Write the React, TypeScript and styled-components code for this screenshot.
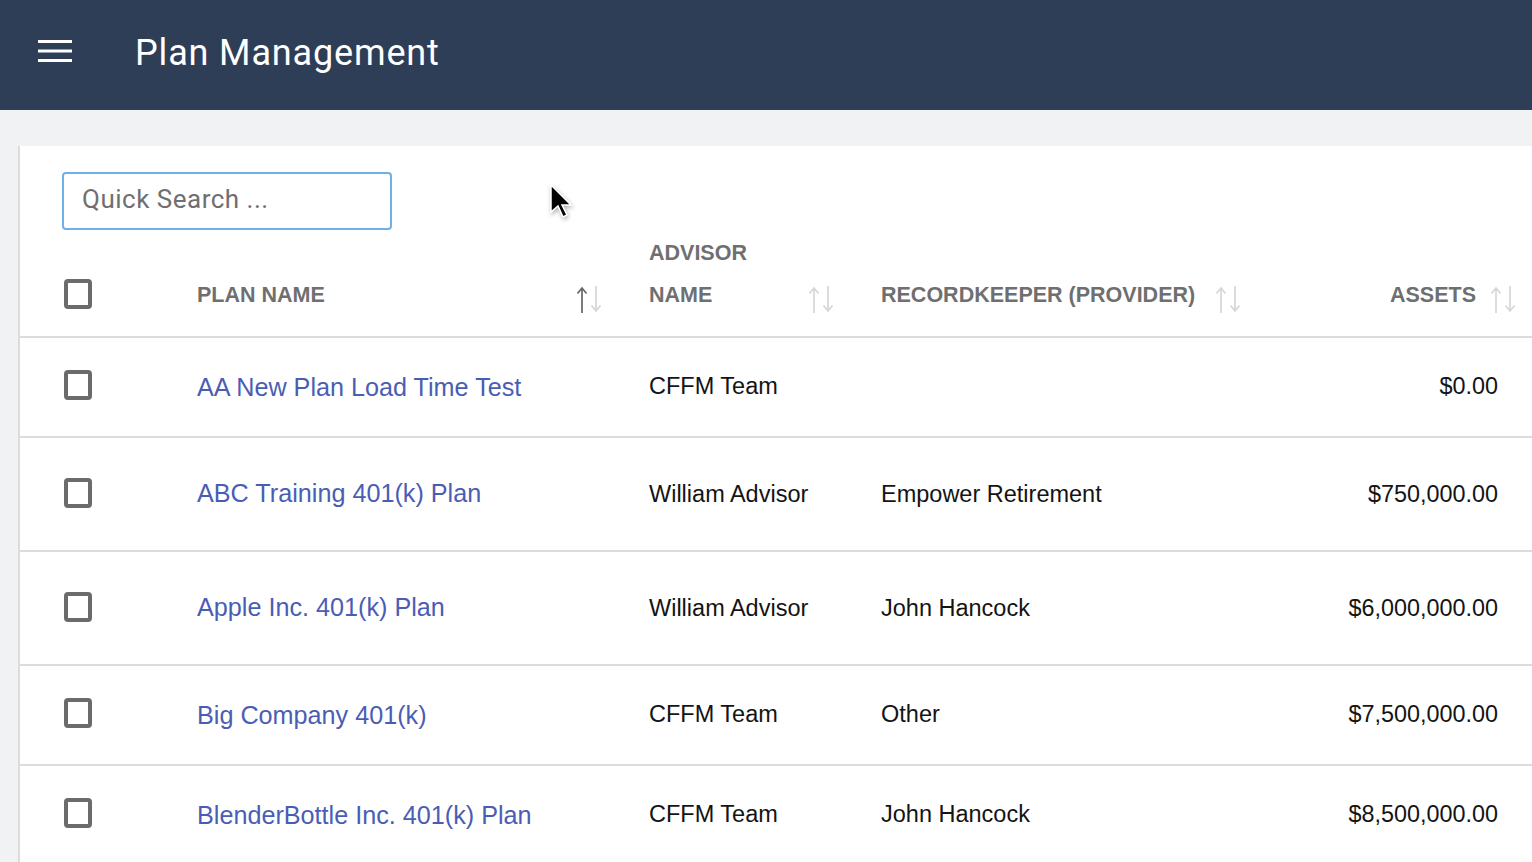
import React from "react";
import styled, { createGlobalStyle } from "styled-components";

const Global = createGlobalStyle`
  html, body { margin: 0; padding: 0; height: 100%; overflow: hidden; background: #f1f2f4; }
  * { box-sizing: border-box; }
`;

const Page = styled.div`
  position: relative;
  width: 1532px;
  height: 862px;
  overflow: hidden;
  background: #f1f2f4;
  font-family: "Liberation Sans", Arial, sans-serif;
`;

const TopBar = styled.header`
  display: flex;
  align-items: center;
  height: 110px;
  padding-left: 38px;
  background: #2f3e57;
  color: #fff;
`;

const MenuIcon = styled.svg`
  width: 34px;
  height: 24px;
  margin: 0 63px 8px 0;
  flex: none;
`;

const Title = styled.h1`
  margin: 0 0 4px;
  font-family: Roboto, sans-serif;
  font-weight: 400;
  font-size: 36px;
  letter-spacing: 0.85px;
  white-space: nowrap;
`;

const Card = styled.main`
  margin: 36px 0 0 18px;
  border-left: 2px solid #dcdcdc;
  background: #fff;
  height: 716px;
`;

const Toolbar = styled.div`
  padding: 26px 0 0 42px;
  height: 84px;
`;

const Search = styled.input`
  display: block;
  width: 330px;
  height: 58px;
  padding: 0 18px 4px;
  border: 2px solid #6fb0ec;
  border-radius: 4px;
  outline: none;
  font-family: Roboto, sans-serif;
  font-size: 26px;
  letter-spacing: 0.5px;
  color: #666;
  background: #fff;
  &::placeholder { color: #6f6f6f; opacity: 1; }
`;

const Row = styled.div<{ $h: number }>`
  display: grid;
  grid-template-columns: 177px 452px 232px 420px 1fr;
  height: ${p => p.$h}px;
  border-bottom: 2px solid #dcdcdc;
  align-items: center;
`;

const HeadRow = styled(Row)`
  align-items: end;
  padding-bottom: 19px;
`;

const CheckCell = styled.div<{ $lift: number }>`
  padding-left: 44px;
  display: flex;
  transform: translateY(${p => -p.$lift}px);
`;

const HeadCheckCell = styled(CheckCell)`
  padding-bottom: 8px;
`;

const Box = styled.span`
  display: block;
  width: 28px;
  height: 30px;
  border: 4px solid #6b6b6b;
  border-radius: 4px;
  background: #fff;
`;

const Head = styled.div<{ $pad: number; $between?: boolean; $right?: boolean }>`
  display: flex;
  align-items: flex-end;
  justify-content: ${p => (p.$right ? "flex-end" : p.$between ? "space-between" : "flex-start")};
  padding-right: ${p => p.$pad}px;
  color: #6f6f6f;
  font-weight: 700;
  font-size: 21.5px;
  line-height: 42px;
`;

const HeadText = styled.span`
  margin-bottom: 1px;
  white-space: nowrap;
`;

const SortIcon = styled.svg<{ $gap: number }>`
  width: 26px;
  height: 28px;
  flex: none;
  margin: 0 0 3px ${p => p.$gap}px;
`;

const PlanLink = styled.a<{ $lift: number }>`
  color: #4a5db5;
  font-size: 25.2px;
  text-decoration: none;
  transform: translateY(${p => -p.$lift}px);
`;

const Cell = styled.div<{ $lift?: number }>`
  color: #141414;
  font-size: 23.5px;
  transform: translateY(${p => -(p.$lift ?? 0)}px);
`;

const Amount = styled(Cell)`
  text-align: right;
  padding-right: 34px;
  font-size: 23.4px;
`;

const Cursor = styled.svg`
  position: absolute;
  left: 545px;
  top: 181px;
  width: 28px;
  height: 40px;
  filter: drop-shadow(1px 2px 2px rgba(0, 0, 0, 0.3));
`;

const Sort = ({ active, gap = 0 }: { active?: boolean; gap?: number }) => (
  <SortIcon $gap={gap} viewBox="0 0 26 28" fill="none" strokeWidth="1.700">
    <g stroke={active ? "#666" : "#d6d6d6"}>
      <path d="M6 27V2" />
      <path d="M1.500 7.500 6 2l4.500 5.500" />
    </g>
    <g stroke="#d6d6d6">
      <path d="M20 0v25" />
      <path d="M15.500 19.500 20 25l4.500-5.500" />
    </g>
  </SortIcon>
);

const rows = [
  { h: 100, box: 2, link: 0, cell: 1, name: "AA New Plan Load Time Test", advisor: "CFFM Team", keeper: "", assets: "$0.00" },
  { h: 114, box: 1, link: 1, cell: 0, name: "ABC Training 401(k) Plan", advisor: "William Advisor", keeper: "Empower Retirement", assets: "$750,000.00" },
  { h: 114, box: 1, link: 1, cell: 0, name: "Apple Inc. 401(k) Plan", advisor: "William Advisor", keeper: "John Hancock", assets: "$6,000,000.00" },
  { h: 100, box: 2, link: 0, cell: 1, name: "Big Company 401(k)", advisor: "CFFM Team", keeper: "Other", assets: "$7,500,000.00" },
  { h: 100, box: 2, link: 0, cell: 1, name: "BlenderBottle Inc. 401(k) Plan", advisor: "CFFM Team", keeper: "John Hancock", assets: "$8,500,000.00" },
];

export default function App() {
  return (
    <Page>
      <Global />
      <TopBar>
        <MenuIcon viewBox="0 0 34 24" fill="none" stroke="#fff" strokeWidth="3">
          <path d="M0 2.500h34M0 12h34M0 21.500h34" />
        </MenuIcon>
        <Title>Plan Management</Title>
      </TopBar>
      <Card>
        <Toolbar>
          <Search placeholder="Quick Search ..." />
        </Toolbar>
        <HeadRow $h={108}>
          <HeadCheckCell $lift={0}><Box /></HeadCheckCell>
          <Head $pad={47} $between>
            <HeadText>PLAN NAME</HeadText>
            <Sort active />
          </Head>
          <Head $pad={47} $between>
            <HeadText>ADVISOR<br />NAME</HeadText>
            <Sort />
          </Head>
          <Head $pad={0}>
            <HeadText>RECORDKEEPER (PROVIDER)</HeadText>
            <Sort gap={20} />
          </Head>
          <Head $pad={16} $right>
            <HeadText>ASSETS</HeadText>
            <Sort gap={14} />
          </Head>
        </HeadRow>
        {rows.map(r => (
          <Row key={r.name} $h={r.h}>
            <CheckCell $lift={r.box}><Box /></CheckCell>
            <PlanLink $lift={r.link} href="#">{r.name}</PlanLink>
            <Cell $lift={r.cell}>{r.advisor}</Cell>
            <Cell $lift={r.cell}>{r.keeper}</Cell>
            <Amount $lift={r.cell}>{r.assets}</Amount>
          </Row>
        ))}
      </Card>
      <Cursor viewBox="0 0 28 40">
        <path d="M6 4v27l7-6 5 11 4-2-5-10h9z" fill="#000" stroke="#fff" strokeWidth="1.5" />
      </Cursor>
    </Page>
  );
}
